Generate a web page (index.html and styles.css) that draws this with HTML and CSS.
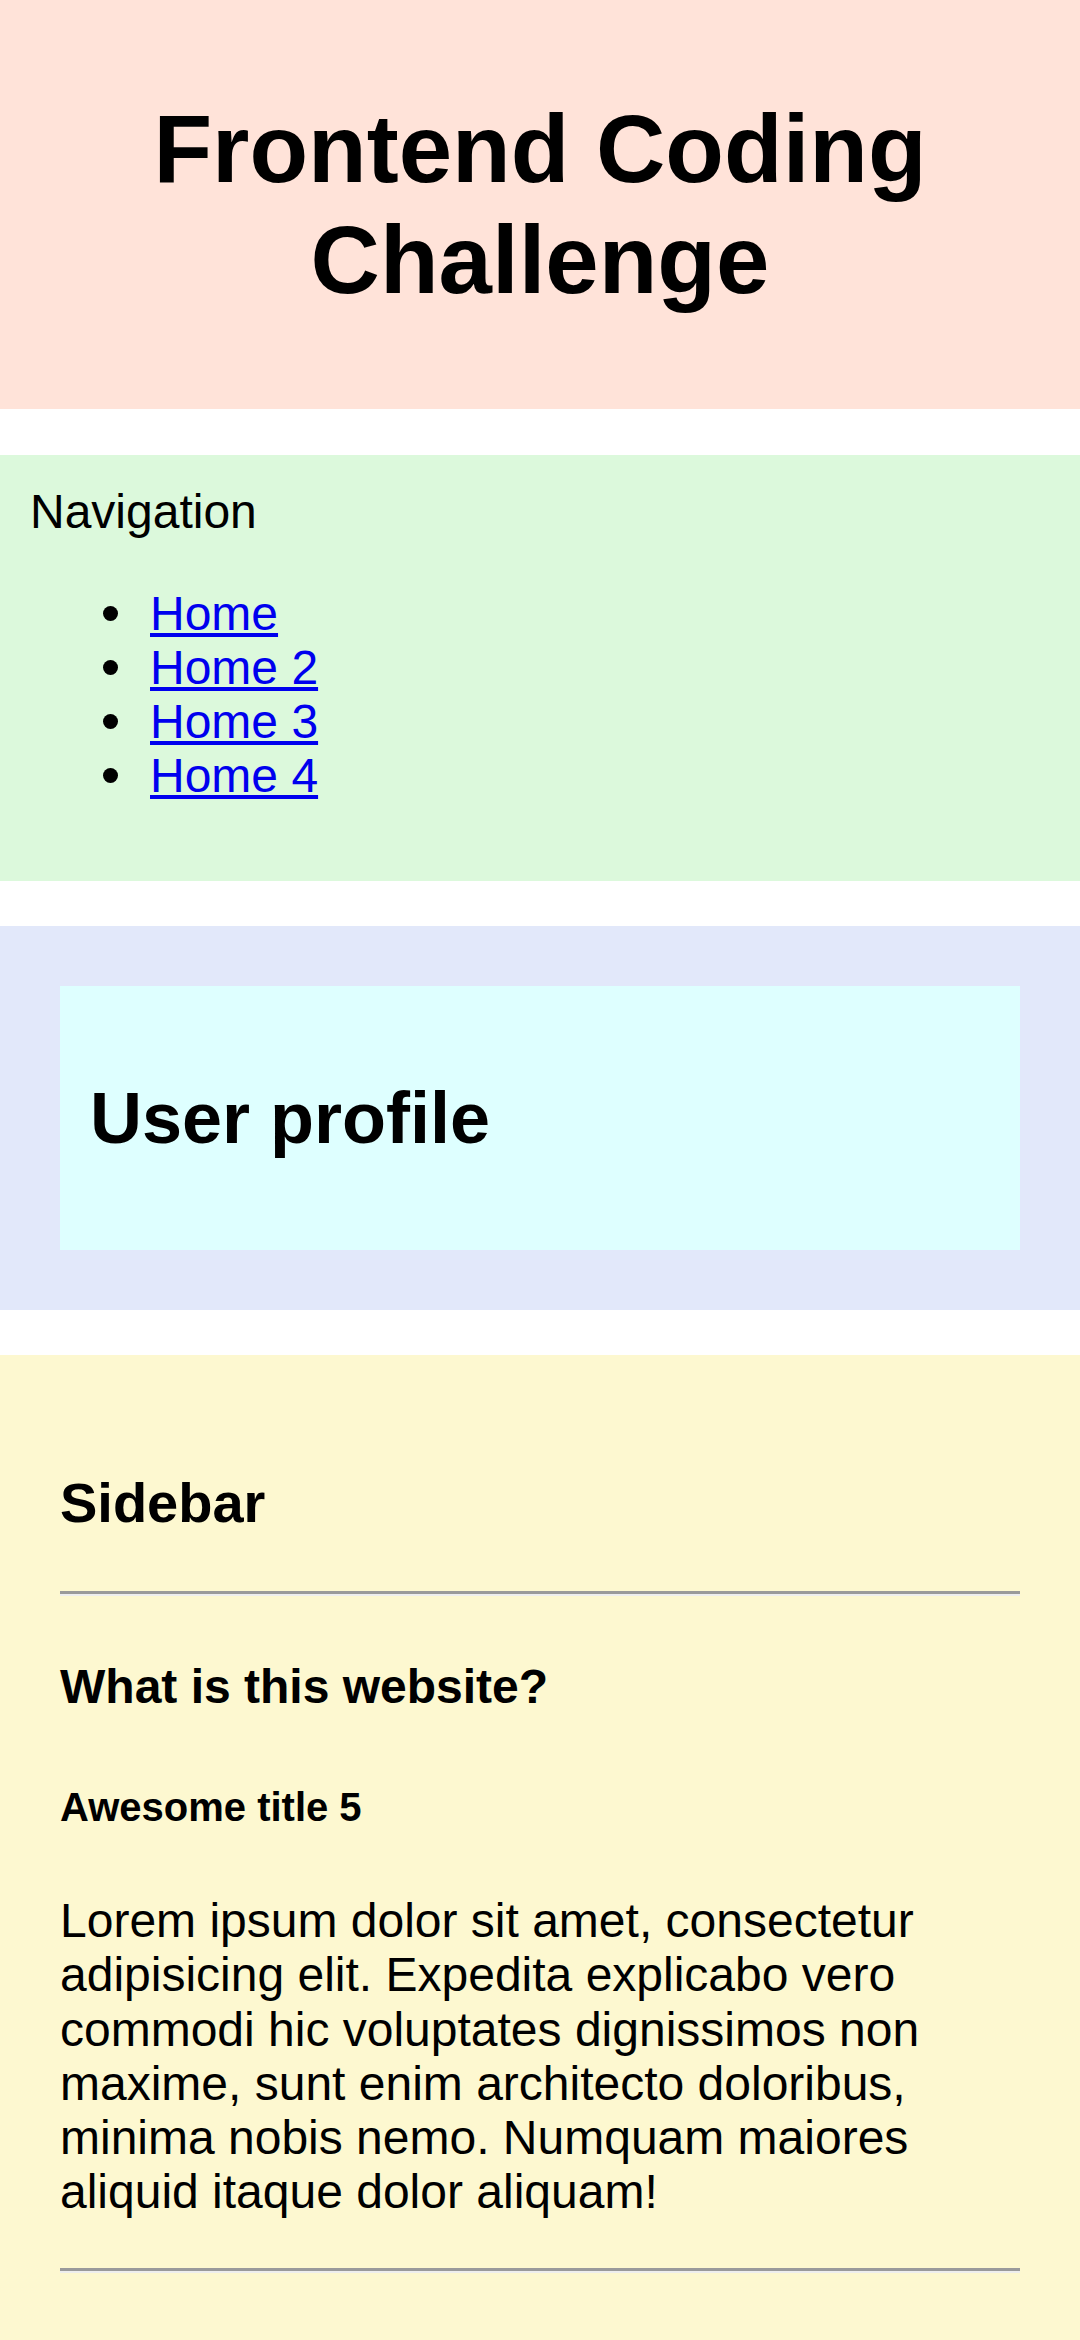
FILE: index.html
```html
<!DOCTYPE html>
<html lang="en">
<head>
<meta charset="utf-8">
<title>Frontend Coding Challenge</title>
<link rel="stylesheet" href="styles.css">
</head>
<body>
  <header class="site-header">
    <h1 class="site-title">Frontend Coding Challenge</h1>
  </header>

  <nav class="site-nav">
    <div class="nav-label">Navigation</div>
    <ul class="nav-list">
      <li><a href="#">Home</a></li>
      <li><a href="#">Home 2</a></li>
      <li><a href="#">Home 3</a></li>
      <li><a href="#">Home 4</a></li>
    </ul>
  </nav>

  <section class="profile">
    <div class="profile-card">
      <h2 class="profile-title">User profile</h2>
    </div>
  </section>

  <aside class="sidebar">
    <h3 class="sidebar-title">Sidebar</h3>
    <hr class="rule">
    <h4 class="sidebar-q">What is this website?</h4>
    <h5 class="sidebar-sub">Awesome title 5</h5>
    <p class="sidebar-text">Lorem ipsum dolor sit amet, consectetur adipisicing elit. Expedita explicabo vero commodi hic voluptates dignissimos non maxime, sunt enim architecto doloribus, minima nobis nemo. Numquam maiores aliquid itaque dolor aliquam!</p>
    <hr class="rule">
  </aside>
</body>
</html>
```

FILE: styles.css
```css
html, body {
  margin: 0;
  padding: 0;
  background: #ffffff;
}

body {
  font-family: "Liberation Sans", Arial, Helvetica, sans-serif;
  font-size: 48px;
  line-height: 54px;
  color: #000000;
}

.site-header {
  background: #ffe3d9;
  padding: 30px;
  margin-bottom: 46px;
}

.site-title {
  font-size: 96px;
  font-weight: 700;
  line-height: 110.5px;
  text-align: center;
  margin: 64px 0;
}

.site-nav {
  background: #dcf9dc;
  padding: 30px;
  margin-bottom: 45px;
}

.nav-label {
  line-height: 54px;
}

.nav-list {
  margin: 48px 0;
  padding-left: 120px;
  list-style: none;
}

.nav-list li {
  line-height: 54px;
}

.nav-list li::before {
  content: "";
  display: inline-block;
  width: 15px;
  height: 15px;
  border-radius: 50%;
  background: #000000;
  margin-left: -47px;
  margin-right: 32px;
  vertical-align: 9px;
}

.nav-list a {
  color: #0000ee;
  text-decoration: underline;
}

.profile {
  background: #e2e8fa;
  padding: 60px;
  margin-bottom: 45px;
}

.profile-card {
  background: #deffff;
  padding: 30px;
}

.profile-title {
  font-size: 72px;
  font-weight: 700;
  line-height: 84px;
  margin: 60px 0;
}

.sidebar {
  background: #fdf8d0;
  padding: 60px;
}

.sidebar-title {
  font-size: 56px;
  font-weight: 700;
  line-height: 64px;
  margin: 56px 0;
}

.rule {
  border: 0;
  border-top: 3px solid #9a9a9a;
  border-bottom: 2px solid #eeeeee;
  height: 0;
  margin: 24px 0;
}

.sidebar-q {
  font-size: 48px;
  font-weight: 700;
  line-height: 54px;
  margin: 64px 0;
}

.sidebar-sub {
  font-size: 40px;
  font-weight: 700;
  line-height: 46px;
  margin: 70px 0 64px;
}

.sidebar-text {
  margin: 48px 0;
  line-height: 54.3px;
}
```
